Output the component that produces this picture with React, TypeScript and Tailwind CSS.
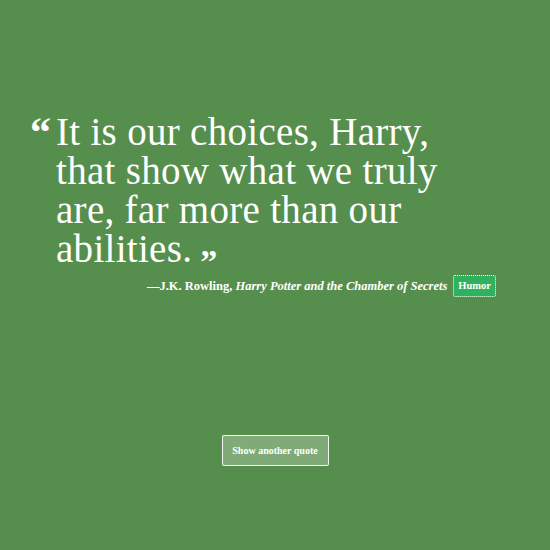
export default function App() {
  return (
    <div className="w-[550px] h-[550px] bg-[#568f4d] text-white font-['Liberation_Serif',serif] flex flex-col">
      <div className="pt-[112px] pl-[30px] w-[496px]">
        <div className="flex">
          <span className="w-[26px] shrink-0 text-[42px] leading-[40px] font-bold">“</span>
          <p className="text-[39px] leading-[39px] tracking-[0.3px]">
            It is our choices, Harry,<br />
            that show what we truly<br />
            are, far more than our<br />
            abilities.<span className="relative top-[11px] ml-[8px] text-[34px] leading-[20px] font-bold">”</span>
          </p>
        </div>
        <div className="mt-[7px] flex justify-end items-center gap-[6px]">
          <span className="text-[12.5px] font-bold">
            —J.K. Rowling, <i>Harry Potter and the Chamber of Secrets</i>
          </span>
          <span className="bg-[#2fb25e] border border-dotted border-white rounded-[2px] px-[4px] py-[4px] text-[10.5px] font-bold leading-[12px]">
            Humor
          </span>
        </div>
      </div>
      <div className="mt-[138px] flex justify-center">
        <button className="w-[107px] h-[31px] bg-white/25 border border-white/90 rounded-[2px] text-[10px] font-bold">
          Show another quote
        </button>
      </div>
    </div>
  );
}
